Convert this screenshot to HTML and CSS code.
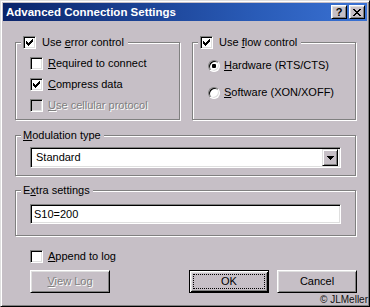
FILE: index.html
```html
<!DOCTYPE html>
<html>
<head>
<meta charset="utf-8">
<title>Advanced Connection Settings</title>
<link rel="stylesheet" href="styles.css">
</head>
<body>
<div class="window">
  <div class="titlebar">
    <span class="title">Advanced Connection Settings</span>
    <div class="tbtns">
      <span class="tbtn raised help">?</span>
      <span class="tbtn raised close">
        <svg width="8" height="7" viewBox="0 0 8 7" shape-rendering="crispEdges"><path d="M0 0h2v1h-2zM6 0h2v1h-2zM1 1h2v1h-2zM5 1h2v1h-2zM2 2h4v1h-4zM3 3h2v1h-2zM2 4h4v1h-4zM1 5h2v1h-2zM5 5h2v1h-2zM0 6h2v1h-2zM6 6h2v1h-2z" fill="#000"/></svg>
      </span>
    </div>
  </div>

  <div class="main">
    <div class="top-row">
      <fieldset class="group">
        <legend class="cb-legend">
          <span class="cb"><svg width="11" height="11" viewBox="-1 -1 11 11" shape-rendering="crispEdges"><path d="M1 3h1v3h-1zM2 4h1v3h-1zM3 5h1v3h-1zM4 4h1v3h-1zM5 3h1v3h-1zM6 2h1v3h-1zM7 1h1v3h-1z" fill="#000"/></svg></span>
          <span class="lbl">Use <u>e</u>rror control</span>
        </legend>
        <div class="inner checks">
          <div class="row"><span class="cb"></span><span class="lbl"><u>R</u>equired to connect</span></div>
          <div class="row"><span class="cb"><svg width="11" height="11" viewBox="-1 -1 11 11" shape-rendering="crispEdges"><path d="M1 3h1v3h-1zM2 4h1v3h-1zM3 5h1v3h-1zM4 4h1v3h-1zM5 3h1v3h-1zM6 2h1v3h-1zM7 1h1v3h-1z" fill="#000"/></svg></span><span class="lbl"><u>C</u>ompress data</span></div>
          <div class="row"><span class="cb disabled"></span><span class="lbl dis"><u>U</u>se cellular protocol</span></div>
        </div>
      </fieldset>

      <fieldset class="group">
        <legend class="cb-legend">
          <span class="cb"><svg width="11" height="11" viewBox="-1 -1 11 11" shape-rendering="crispEdges"><path d="M1 3h1v3h-1zM2 4h1v3h-1zM3 5h1v3h-1zM4 4h1v3h-1zM5 3h1v3h-1zM6 2h1v3h-1zM7 1h1v3h-1z" fill="#000"/></svg></span>
          <span class="lbl">Use <u>f</u>low control</span>
        </legend>
        <div class="inner radios">
          <div class="row"><span class="radio on"></span><span class="lbl"><u>H</u>ardware (RTS/CTS)</span></div>
          <div class="row"><span class="radio"></span><span class="lbl"><u>S</u>oftware (XON/XOFF)</span></div>
        </div>
      </fieldset>
    </div>

    <fieldset class="group mod">
      <legend class="txt-legend"><u>M</u>odulation type</legend>
      <div class="inner combo-wrap">
        <div class="field combo">
          <span class="value">Standard</span>
          <span class="ddbtn raised">
            <svg width="7" height="4" viewBox="0 0 7 4" shape-rendering="crispEdges"><path d="M0 0h7v1h-7zM1 1h5v1h-5zM2 2h3v1h-3zM3 3h1v1h-1z" fill="#000"/></svg>
          </span>
        </div>
      </div>
    </fieldset>

    <fieldset class="group extra">
      <legend class="txt-legend">E<u>x</u>tra settings</legend>
      <div class="inner input-wrap">
        <div class="field input"><span class="value">S10=200</span></div>
      </div>
    </fieldset>

    <div class="row append"><span class="cb"></span><span class="lbl"><u>A</u>ppend to log</span></div>

    <div class="buttons">
      <span class="btn raised disabled-btn"><span class="btxt dis"><u>V</u>iew Log</span></span>
      <span class="btn default"><span class="focus">OK</span></span>
      <span class="btn raised cancel"><span class="btxt">Cancel</span></span>
    </div>
  </div>

  <div class="copyright">© JLMeller</div>
</div>
</body>
</html>
```

FILE: styles.css
```css
* { box-sizing: border-box; }

html, body {
  margin: 0;
  padding: 0;
}

body {
  width: 370px;
  height: 307px;
  overflow: hidden;
  background: #c6bfc6;
  font: 11px "Liberation Sans", Arial, sans-serif;
  color: #000;
}

u {
  text-decoration-skip-ink: none;
  text-underline-offset: 1px;
}

.window {
  position: relative;
  width: 370px;
  height: 307px;
  padding: 2px;
  border: 1px solid;
  border-color: #dfdfdf #000 #000 #dfdfdf;
  box-shadow: inset 1px 1px #fff, inset -1px -1px #808080;
  background: #c6bfc6;
}

/* Title bar */
.titlebar {
  height: 18px;
  display: flex;
  align-items: center;
  justify-content: space-between;
  padding: 0 2px 0 3px;
  background: linear-gradient(to right, #0a246a 0%, #2a5cb8 70%, #3a72d4 100%);
  color: #fff;
}

.title {
  font-weight: bold;
  font-size: 11.5px;
  line-height: 18px;
  white-space: nowrap;
}

.tbtns {
  display: flex;
  gap: 2px;
}

.raised {
  background: #c6bfc6;
  border: 1px solid;
  border-color: #fff #000 #000 #fff;
  box-shadow: inset 1px 1px #dfdfdf, inset -1px -1px #808080;
}

.tbtn {
  width: 16px;
  height: 14px;
  display: flex;
  align-items: center;
  justify-content: center;
  color: #000;
  font-weight: bold;
  font-size: 11px;
  line-height: 12px;
}

.tbtn svg { display: block; }

/* Main area */
.main {
  padding: 15px 11px 0 12px;
}

.top-row {
  display: grid;
  grid-template-columns: 165px 164px;
  column-gap: 12px;
}

fieldset.group {
  margin: 0;
  padding: 0;
  min-width: 0;
  border: 1px solid #808080;
  box-shadow: inset 1px 1px #fff, 1px 1px #fff;
}

legend {
  height: 13px;
  line-height: 13px;
  margin-left: 5px;
  background: #c6bfc6;
}

.cb-legend {
  display: flex;
  align-items: center;
  padding: 0 4px 0 2px;
}

.cb-legend .cb { margin-right: 6px; }

.txt-legend {
  padding: 0 3px 0 2px;
}

.inner {
  display: flex;
  flex-direction: column;
}

.checks {
  padding: 8px 0 7px 14px;
  gap: 8px;
}

.radios {
  padding: 10px 0 0 15px;
  gap: 14px;
}

.row {
  display: flex;
  align-items: center;
  height: 13px;
  line-height: 13px;
  white-space: nowrap;
}

.row .cb { margin-right: 5px; }
.row .radio { margin-right: 4px; }

/* Checkbox */
.cb {
  flex: none;
  width: 13px;
  height: 13px;
  background: #fff;
  border: 1px solid;
  border-color: #808080 #fff #fff #808080;
  box-shadow: inset 1px 1px #000, inset -1px -1px #dfdfdf;
}

.cb svg { display: block; }

.cb.disabled { background: #c6bfc6; }

/* Radio */
.radio {
  flex: none;
  width: 12px;
  height: 12px;
  border-radius: 50%;
  background: #fff;
  border: 1px solid;
  border-color: #808080 #fff #fff #808080;
  box-shadow: inset 1px 1px #000, inset -1px -1px #dfdfdf;
  display: flex;
  align-items: center;
  justify-content: center;
}

.radio.on::after {
  content: "";
  width: 4px;
  height: 4px;
  border-radius: 1px;
  background: #000;
}

.dis {
  color: #808080;
  text-shadow: 1px 1px 0 #fff;
}

/* Groups below */
fieldset.group.mod { margin-top: 9px; }
fieldset.group.extra { margin-top: 8px; }

.combo-wrap { padding: 5px 14px 7px 14px; }
.input-wrap { padding: 7px 14px 11px 14px; }

.field {
  background: #fff;
  border: 1px solid;
  border-color: #808080 #fff #fff #808080;
  box-shadow: inset 1px 1px #000, inset -1px -1px #dfdfdf;
  padding: 2px;
  display: flex;
  align-items: center;
}

.combo { height: 21px; }
.combo .value { flex: 1; padding-left: 3px; line-height: 17px; }

.input { height: 20px; }
.input .value { padding-left: 1px; line-height: 16px; }

.ddbtn {
  width: 16px;
  height: 17px;
  display: flex;
  align-items: center;
  justify-content: center;
  border-color: #dfdfdf #000 #000 #dfdfdf;
  box-shadow: inset 1px 1px #fff, inset -1px -1px #808080;
}

.ddbtn svg { display: block; }

/* Append row */
.append {
  margin-top: 14px;
  padding-left: 15px;
}

/* Buttons */
.buttons {
  display: flex;
  margin-top: 7px;
  padding-left: 15px;
  margin-right: -1px;
}

.btn {
  width: 80px;
  height: 23px;
  display: flex;
  align-items: center;
  justify-content: center;
  line-height: 13px;
}

.btn.default {
  margin-left: auto;
  background: #c6bfc6;
  border: 1px solid #000;
  box-shadow: inset 1px 1px #fff, inset -1px -1px #000, inset 2px 2px #dfdfdf, inset -2px -2px #808080;
  padding: 3px;
}

.focus {
  flex: 1;
  align-self: stretch;
  display: flex;
  align-items: center;
  justify-content: center;
  border: 1px dotted #000;
}

.cancel { margin-left: 8px; }

.copyright {
  position: absolute;
  right: 1px;
  bottom: 0;
  font-size: 10px;
  line-height: 12px;
  color: #111;
  white-space: nowrap;
}
```
